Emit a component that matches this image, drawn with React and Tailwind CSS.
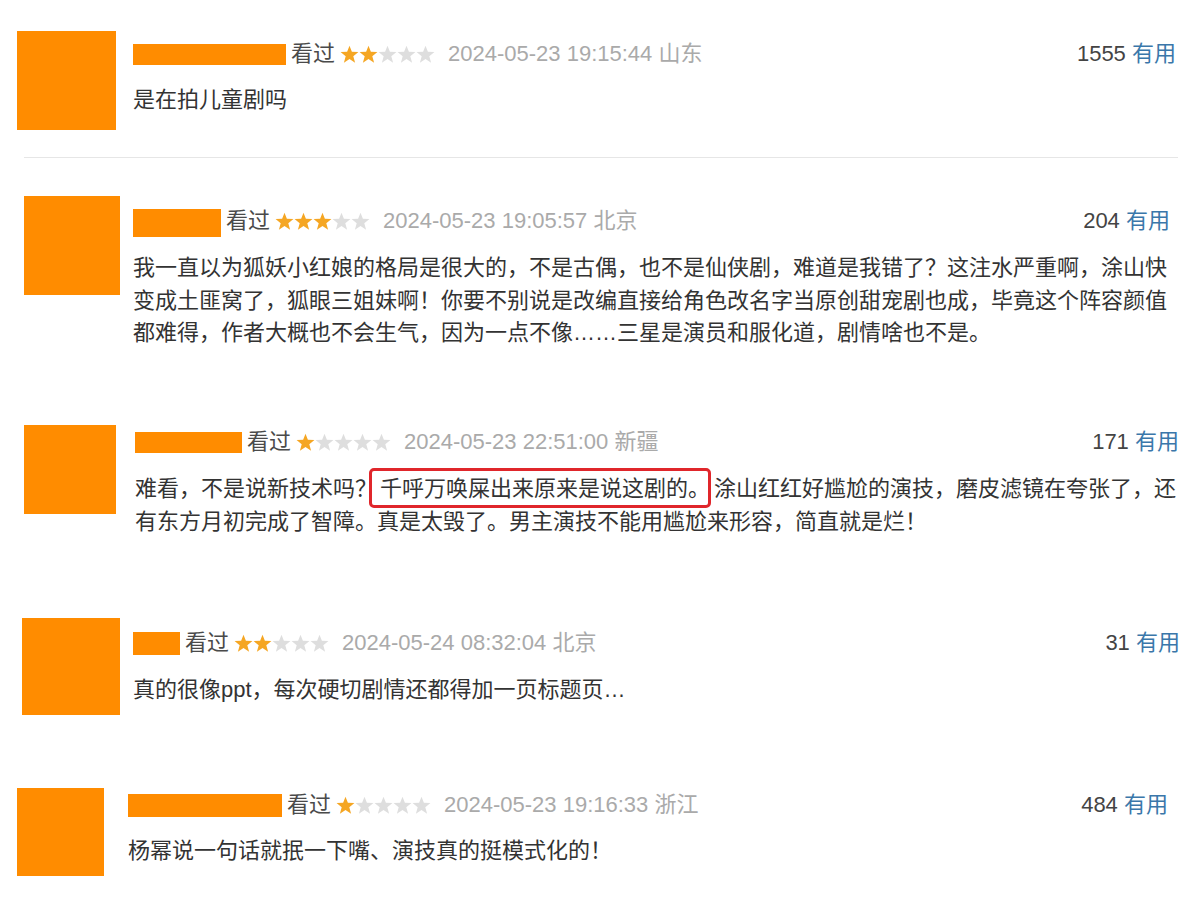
import React from "react";

const STAR = "10,0.3 12.5,6.6 19.4,6.9 14.0,11.3 15.9,18.2 10,14.3 4.1,18.2 6.0,11.3 0.6,6.9 7.5,6.6";

function Stars({ n }) {
  return (
    <span className="flex items-center">
      {[0, 1, 2, 3, 4].map((i) => (
        <svg key={i} width="19" height="19" viewBox="0 0 20 19" className="block">
          <polygon points={STAR} fill={i < n ? "#f5a623" : "#dedede"} />
        </svg>
      ))}
    </span>
  );
}

function Header({ barCls, stars, date, loc, count }) {
  return (
    <div className="flex items-center h-[24px] text-[22px] leading-[24px] whitespace-nowrap">
      <div className={barCls} />
      <span className="ml-[5px] text-[#4a4a4a]">看过</span>
      <span className="ml-[5px]">
        <Stars n={stars} />
      </span>
      <span className="ml-[13px] text-[#aaaaaa]">
        {date} {loc}
      </span>
      <span className="ml-auto text-[#444444]">
        {count} <span className="text-[#3a77aa]">有用</span>
      </span>
    </div>
  );
}

export default function App() {
  return (
    <div className="w-[1200px] h-[907px] bg-white overflow-hidden font-['Liberation_Sans','Noto_Sans_CJK_SC',sans-serif]">
      {/* Block 1 */}
      <div className="h-[157px] flex pl-[17px] pr-[24px] pt-[31px]">
        <div className="w-[99px] h-[99px] bg-[#ff8c00] shrink-0" />
        <div className="ml-[17px] flex-1 pt-[11px]">
          <Header
            barCls="w-[153px] h-[21px] bg-[#ff8c00]"
            stars={2}
            date="2024-05-23 19:15:44"
            loc="山东"
            count="1555"
          />
          <div className="mt-[18px] text-[22px] leading-[32px] text-[#333333]">是在拍儿童剧吗</div>
        </div>
      </div>
      <div className="ml-[24px] w-[1154px] h-px bg-[#e6e6e6]" />

      {/* Block 2 */}
      <div className="h-[252px] flex pl-[24px] pr-[30px] pt-[38px]">
        <div className="w-[96px] h-[99px] bg-[#ff8c00] shrink-0" />
        <div className="ml-[13px] flex-1 pt-[13px]">
          <Header
            barCls="w-[88px] h-[28px] mt-[4px] bg-[#ff8c00]"
            stars={3}
            date="2024-05-23 19:05:57"
            loc="北京"
            count="204"
          />
          <div className="mt-[19px] text-[22px] leading-[32.5px] text-[#333333] whitespace-nowrap">
            <div>我一直以为狐妖小红娘的格局是很大的，不是古偶，也不是仙侠剧，难道是我错了？这注水严重啊，涂山快</div>
            <div>变成土匪窝了，狐眼三姐妹啊！你要不别说是改编直接给角色改名字当原创甜宠剧也成，毕竟这个阵容颜值</div>
            <div>都难得，作者大概也不会生气，因为一点不像……三星是演员和服化道，剧情啥也不是。</div>
          </div>
        </div>
      </div>

      {/* Block 3 */}
      <div className="h-[190px] flex pl-[24px] pr-[21px] pt-[15px]">
        <div className="w-[92px] h-[89px] bg-[#ff8c00] shrink-0" />
        <div className="ml-[19px] flex-1 pt-[5px]">
          <Header
            barCls="w-[107px] h-[21px] bg-[#ff8c00]"
            stars={1}
            date="2024-05-23 22:51:00"
            loc="新疆"
            count="171"
          />
          <div className="mt-[18px] text-[22px] leading-[33px] text-[#333333] whitespace-nowrap">
            <div>
              难看，不是说新技术吗？
              <span className="relative inline-block h-[33px] ml-[3px] mr-[4px]">
                千呼万唤屎出来原来是说这剧的。
                <span className="absolute left-[-11px] right-[-1px] top-[-4px] bottom-[-3px] border-[3px] border-[#e0262b] rounded-[5px]" />
              </span>
              涂山红红好尴尬的演技，磨皮滤镜在夸张了，还
            </div>
            <div>有东方月初完成了智障。真是太毁了。男主演技不能用尴尬来形容，简直就是烂！</div>
          </div>
        </div>
      </div>

      {/* Block 4 */}
      <div className="h-[170px] flex pl-[22px] pr-[20px] pt-[18px]">
        <div className="w-[98px] h-[97px] bg-[#ff8c00] shrink-0" />
        <div className="ml-[13px] flex-1 pt-[13px]">
          <Header
            barCls="w-[47px] h-[23px] bg-[#ff8c00]"
            stars={2}
            date="2024-05-24 08:32:04"
            loc="北京"
            count="31"
          />
          <div className="mt-[19px] text-[22px] leading-[32px] text-[#333333] whitespace-nowrap">真的很像ppt，每次硬切剧情还都得加一页标题页…</div>
        </div>
      </div>

      {/* Block 5 */}
      <div className="h-[137px] flex pl-[17px] pr-[32px] pt-[18px]">
        <div className="w-[87px] h-[88px] bg-[#ff8c00] shrink-0" />
        <div className="ml-[24px] flex-1 pt-[5px]">
          <Header
            barCls="w-[154px] h-[23px] bg-[#ff8c00]"
            stars={1}
            date="2024-05-23 19:16:33"
            loc="浙江"
            count="484"
          />
          <div className="mt-[18px] text-[22px] leading-[32px] text-[#333333] whitespace-nowrap">杨幂说一句话就抿一下嘴、演技真的挺模式化的！</div>
        </div>
      </div>
    </div>
  );
}
